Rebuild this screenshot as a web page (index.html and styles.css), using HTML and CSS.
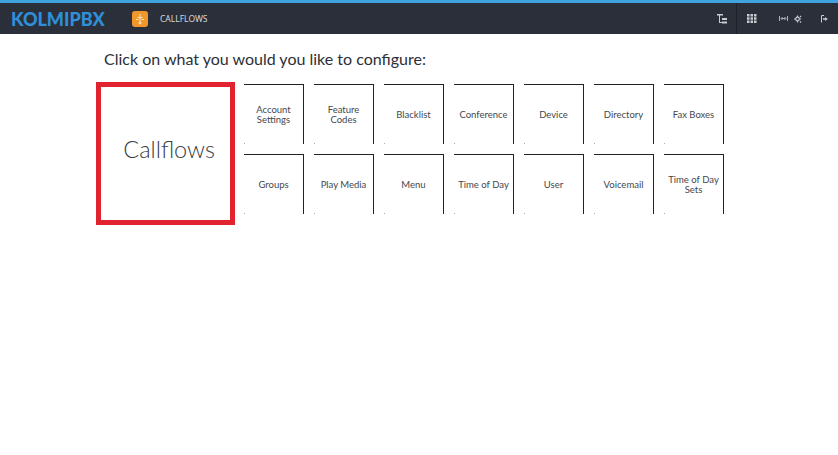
FILE: index.html
```html
<!DOCTYPE html>
<html lang="en">
<head>
<meta charset="utf-8">
<title>Callflows</title>
<link rel="stylesheet" href="styles.css">
</head>
<body>
<header class="topbar">
  <div class="logo">KOLMIPBX</div>
  <div class="app-icon">
    <svg width="12" height="12" viewBox="0 0 12 12" fill="none" stroke="#fde6b8" stroke-width="1"><path d="M6 1v9M3.500 4.500h5M2 6.500h2.500M7.500 6.500H10"/><circle cx="6" cy="10" r="1" fill="#fde6b8"/></svg>
  </div>
  <div class="app-name">CALLFLOWS</div>
  <div class="tools">
    <svg class="tool-tree" width="11" height="10" viewBox="0 0 11 10" fill="#c9ccd1"><path d="M0 0h6v1.500H0zM2 1.500h1V8h2v1H2zM5 4h5v2H5zM5 7.500h5v2H5z"/></svg>
    <div class="tool-divider"></div>
    <svg class="tool-grid" width="10" height="9" viewBox="0 0 10 9" fill="#c9ccd1"><path d="M0 0h2.500v2.500H0zM3.500 0H6v2.500H3.500zM7 0h2.500v2.500H7zM0 3.200h2.500v2.500H0zM3.500 3.200H6v2.500H3.500zM7 3.200h2.500v2.500H7zM0 6.500h2.500V9H0zM3.500 6.500H6V9H3.500zM7 6.500h2.500V9H7z"/></svg>
    <svg class="tool-arrows" width="9" height="5" viewBox="0 0 9 5" fill="none" stroke="#aeb2b8" stroke-width="1"><path d="M.5 0v5M8.500 0v5M2.500 2.500h4M3.500 1l-1.500 1.500 1.500 1.500M5.500 1l1.500 1.500-1.500 1.500"/></svg>
    <svg class="tool-gear" width="8" height="8" viewBox="0 0 8 8" fill="none" stroke="#c9ccd1" stroke-width="1.200"><circle cx="3.500" cy="4" r="1.800"/><path d="M3.500 .5v1.500M3.500 6v1.500M0 4h1.700M5.300 4H7M6 1l1 1M6 6.500l1 1"/></svg>
    <svg class="tool-logout" width="7" height="8" viewBox="0 0 7 8" fill="none" stroke="#c9ccd1" stroke-width="1"><path d="M3 .5H.5v7"/><path d="M2 4h3" stroke-width="1.500"/><path d="M4.200 2l2.600 2-2.600 2z" fill="#c9ccd1" stroke="none"/></svg>
  </div>
</header>
<main class="content">
  <h1 class="prompt">Click on what you would you like to configure:</h1>
  <div class="picker">
    <a class="main-tile">Callflows</a>
    <div class="tiles">
      <a class="tile">Account Settings</a>
      <a class="tile">Feature Codes</a>
      <a class="tile">Blacklist</a>
      <a class="tile">Conference</a>
      <a class="tile">Device</a>
      <a class="tile">Directory</a>
      <a class="tile">Fax Boxes</a>
      <a class="tile">Groups</a>
      <a class="tile">Play Media</a>
      <a class="tile">Menu</a>
      <a class="tile">Time of Day</a>
      <a class="tile">User</a>
      <a class="tile">Voicemail</a>
      <a class="tile">Time of Day Sets</a>
    </div>
  </div>
</main>
</body>
</html>
```
FILE: styles.css
```css
* { box-sizing: border-box; }
html, body { margin: 0; padding: 0; background: #fff; }
body { font-family: "Lato", sans-serif; color: #2c2f36; }

.topbar {
  display: flex;
  align-items: center;
  height: 34px;
  background: #2b2f3a;
  border-top: 3px solid #3fa3e0;
}
.logo {
  width: 132px;
  padding-left: 11px;
  font-family: "Lato", sans-serif;
  font-weight: 900;
  font-size: 18px;
  line-height: 1;
  color: #2f8fd8;
}
.app-icon {
  display: flex;
  align-items: center;
  justify-content: center;
  width: 16px;
  height: 16px;
  border-radius: 3px;
  background: #f0962a;
}
.app-name {
  margin-left: 12px;
  font-family: "Noto Sans", sans-serif;
  font-size: 8.500px;
  color: #d5d7da;
}
.tools {
  display: flex;
  align-items: center;
  align-self: stretch;
  margin-left: auto;
}
.tool-tree { margin-right: 8px; }
.tool-divider { width: 1px; align-self: stretch; background: #1d2029; }
.tool-grid { margin-left: 10px; }
.tool-arrows { margin-left: 22px; }
.tool-gear { margin-left: 6px; }
.tool-logout { margin-left: 19px; margin-right: 10px; }

.content { padding-left: 96px; }
.prompt {
  margin: 0;
  padding: 13px 0 0 8px;
  height: 48px;
  font-size: 16px;
  line-height: 24px;
  font-weight: 400;
  color: #2c2f36;
}
.picker { display: flex; align-items: flex-start; }
.main-tile {
  display: flex;
  align-items: center;
  justify-content: flex-end;
  width: 139px;
  height: 143px;
  padding: 0 15px 9px 0;
  border: 5px solid #e0232e;
  font-size: 23.500px;
  font-weight: 300;
  color: #3a3d44;
}
.tiles {
  display: grid;
  grid-template-columns: repeat(7, 60px);
  grid-auto-rows: 60px;
  gap: 10px;
  margin: 2px 0 0 9px;
}
.tile {
  display: flex;
  align-items: center;
  justify-content: center;
  padding: 0 2px;
  border-top: 1px solid #222;
  border-right: 1px solid #222;
  text-align: center;
  font-size: 9.500px;
  line-height: 10px;
  font-weight: 400;
  color: #44474d;
  background: linear-gradient(#aaa, #aaa) left bottom / 1px 1px no-repeat;
}
```
